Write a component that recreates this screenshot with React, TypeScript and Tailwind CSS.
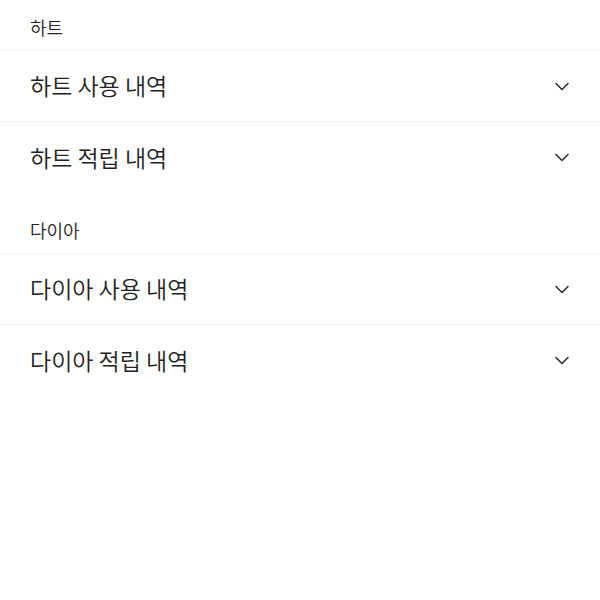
const sections = [
  { title: '하트', items: ['하트 사용 내역', '하트 적립 내역'] },
  { title: '다이아', items: ['다이아 사용 내역', '다이아 적립 내역'] },
];

function Chevron() {
  return (
    <svg width="16" height="10" viewBox="0 0 16 10" fill="none" className="text-[#2a2a2a]">
      <path d="M2 2.5l6 6 6-6" stroke="currentColor" strokeWidth="1.5" strokeLinecap="round" strokeLinejoin="round" />
    </svg>
  );
}

export default function App() {
  return (
    <div
      className="w-[600px] h-[600px] bg-white text-[#222]"
      style={{ fontFamily: '"Noto Sans CJK KR", "Noto Sans", sans-serif' }}
    >
      {sections.map((section, i) => (
        <section key={section.title} className={i > 0 ? 'mt-[10px]' : ''}>
          <div className="h-[51px] flex items-end pb-[9px] px-[30px] text-[18px] font-[350] border-b border-[#f2f2f2]">
            {section.title}
          </div>
          {section.items.map((item, j) => (
            <div
              key={item}
              className={
                'h-[71px] flex items-center justify-between pl-[30px] pr-[30px] pb-[1px] ' +
                (j < section.items.length - 1 ? 'border-b border-[#f2f2f2]' : '')
              }
            >
              <span className="text-[23px] font-[350]">{item}</span>
              <Chevron />
            </div>
          ))}
        </section>
      ))}
    </div>
  );
}
